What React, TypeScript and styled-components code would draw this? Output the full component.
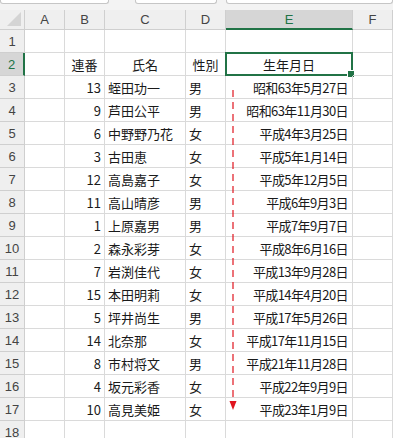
import React from "react";
import styled, { createGlobalStyle } from "styled-components";

const GlobalStyle = createGlobalStyle`
  html, body { margin: 0; padding: 0; background: #ffffff; overflow: hidden; }
  body { font-family: "Noto Sans CJK JP", "Noto Sans", sans-serif; }
`;

const COLS = "25px 40px 40px 81px 40px 127px 1fr";
const GRID = "#dadada";
const HEAD_LINE = "#cfcfcf";
const GREEN = "#217346";

const Page = styled.div`
  width: 393px;
  height: 438px;
  overflow: hidden;
  background: #ffffff;
`;

const TopStrip = styled.div`
  height: 10px;
  background: #f3f3f3;
  display: flex;
  align-items: flex-start;
`;

const FieldEdge = styled.div<{ $w: string }>`
  flex: ${(p) => p.$w};
  height: 3px;
  background: #ffffff;
  border: 1px solid #c6c6c6;
  border-top: none;
  border-radius: 0 0 3px 3px;
`;

const Notch = styled.div<{ $w: number }>`
  width: ${(p) => p.$w}px;
`;

const Sheet = styled.div`
  position: relative;
  display: grid;
  grid-template-columns: ${COLS};
  grid-auto-rows: 23px;
  grid-template-rows: 20px;
`;

const Corner = styled.div`
  position: relative;
  background: #efefef;
  border-right: 1px solid ${HEAD_LINE};
  border-bottom: 1px solid ${HEAD_LINE};
  box-sizing: border-box;
  &::after {
    content: "";
    position: absolute;
    right: 3px;
    bottom: 3px;
    width: 0;
    height: 0;
    border-left: 14px solid transparent;
    border-bottom: 14px solid #d4d4d4;
  }
`;

const ColHead = styled.div<{ $sel?: boolean }>`
  box-sizing: border-box;
  display: flex;
  align-items: center;
  justify-content: center;
  font-family: "Liberation Sans", "Noto Sans", sans-serif;
  font-size: 13px;
  color: ${(p) => (p.$sel ? GREEN : "#444444")};
  background: ${(p) => (p.$sel ? "#d6d6d6" : "#efefef")};
  border-right: 1px solid ${HEAD_LINE};
  border-bottom: ${(p) => (p.$sel ? `2px solid ${GREEN}` : `1px solid ${HEAD_LINE}`)};
  padding-top: ${(p) => (p.$sel ? "1px" : "0")};
`;

const RowHead = styled.div<{ $sel?: boolean }>`
  box-sizing: border-box;
  display: flex;
  align-items: center;
  justify-content: center;
  font-family: "Liberation Sans", "Noto Sans", sans-serif;
  font-size: 13px;
  color: ${(p) => (p.$sel ? GREEN : "#444444")};
  background: ${(p) => (p.$sel ? "#d6d6d6" : "#efefef")};
  border-bottom: 1px solid ${HEAD_LINE};
  border-right: ${(p) => (p.$sel ? `2px solid ${GREEN}` : `1px solid ${HEAD_LINE}`)};
`;

type Align = "left" | "center" | "right";

const Cell = styled.div<{ $align?: Align; $tight?: boolean }>`
  position: relative;
  box-sizing: border-box;
  display: flex;
  align-items: center;
  justify-content: ${(p) =>
    p.$align === "right" ? "flex-end" : p.$align === "center" ? "center" : "flex-start"};
  padding: 1px ${(p) => (p.$tight ? "4px" : "3px")} 0 3px;
  font-size: 13px;
  letter-spacing: ${(p) => (p.$tight ? "-0.6px" : "0")};
  color: #1a1a1a;
  white-space: nowrap;
  border-right: 1px solid ${GRID};
  border-bottom: 1px solid ${GRID};
`;

const ActiveBox = styled.div`
  position: absolute;
  left: -1px;
  top: -1px;
  right: -1px;
  bottom: -1px;
  border: 2px solid ${GREEN};
  pointer-events: none;
  &::after {
    content: "";
    position: absolute;
    right: -4px;
    bottom: -4px;
    width: 6px;
    height: 6px;
    background: ${GREEN};
    border: 1px solid #ffffff;
  }
`;

const SortArrow = styled.svg`
  position: absolute;
  left: 229px;
  top: 80px;
  overflow: visible;
  pointer-events: none;
`;

type Person = { no: number; name: string; sex: string; born: string };

const people: Person[] = [
  { no: 13, name: "蛭田功一", sex: "男", born: "昭和63年5月27日" },
  { no: 9, name: "芦田公平", sex: "男", born: "昭和63年11月30日" },
  { no: 6, name: "中野野乃花", sex: "女", born: "平成4年3月25日" },
  { no: 3, name: "古田恵", sex: "女", born: "平成5年1月14日" },
  { no: 12, name: "高島嘉子", sex: "女", born: "平成5年12月5日" },
  { no: 11, name: "高山晴彦", sex: "男", born: "平成6年9月3日" },
  { no: 1, name: "上原嘉男", sex: "男", born: "平成7年9月7日" },
  { no: 2, name: "森永彩芽", sex: "女", born: "平成8年6月16日" },
  { no: 7, name: "岩渕佳代", sex: "女", born: "平成13年9月28日" },
  { no: 15, name: "本田明莉", sex: "女", born: "平成14年4月20日" },
  { no: 5, name: "坪井尚生", sex: "男", born: "平成17年5月26日" },
  { no: 14, name: "北奈那", sex: "女", born: "平成17年11月15日" },
  { no: 8, name: "市村将文", sex: "男", born: "平成21年11月28日" },
  { no: 4, name: "坂元彩香", sex: "女", born: "平成22年9月9日" },
  { no: 10, name: "高見美姫", sex: "女", born: "平成23年1月9日" },
];

const letters = ["A", "B", "C", "D", "E", "F"];

function EmptyRow({ n }: { n: number }) {
  return (
    <>
      <RowHead>{n}</RowHead>
      {letters.map((l) => (
        <Cell key={l} />
      ))}
    </>
  );
}

export default function App() {
  return (
    <Page>
      <GlobalStyle />
      <TopStrip>
        <FieldEdge $w="0 0 107px" />
        <Notch $w={26} />
        <FieldEdge $w="0 0 80px" />
        <Notch $w={9} />
        <FieldEdge $w="1 1 auto" />
      </TopStrip>
      <Sheet>
        <Corner />
        {letters.map((l) => (
          <ColHead key={l} $sel={l === "E"}>
            {l}
          </ColHead>
        ))}

        <EmptyRow n={1} />

        <RowHead $sel>2</RowHead>
        <Cell />
        <Cell $align="center">連番</Cell>
        <Cell $align="center">氏名</Cell>
        <Cell $align="center">性別</Cell>
        <Cell $align="center">
          生年月日
          <ActiveBox />
        </Cell>
        <Cell />

        {people.map((p, i) => (
          <React.Fragment key={p.no}>
            <RowHead>{i + 3}</RowHead>
            <Cell />
            <Cell $align="right">{p.no}</Cell>
            <Cell>{p.name}</Cell>
            <Cell>{p.sex}</Cell>
            <Cell $align="right" $tight>
              {p.born}
            </Cell>
            <Cell />
          </React.Fragment>
        ))}

        <EmptyRow n={18} />

        <SortArrow width="8" height="322" viewBox="0 0 8 322">
          <line
            x1="4"
            y1="0"
            x2="4"
            y2="312"
            stroke="#e0141e"
            strokeWidth="1.2"
            strokeDasharray="7 5"
          />
          <polygon points="0.5,311 7.5,311 4,320" fill="#e0141e" />
        </SortArrow>
      </Sheet>
    </Page>
  );
}
